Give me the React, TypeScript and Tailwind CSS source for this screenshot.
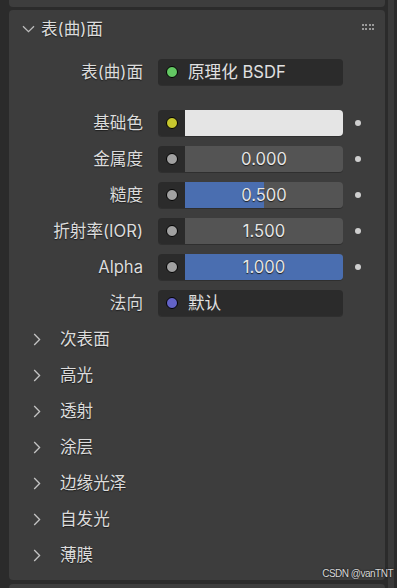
import React from "react";

// ── Data ──────────────────────────────────────────────────────────────────
type Prop = {
  label: string;
  socket: string;
  kind: "color" | "value" | "link";
  value?: string;
  fill?: number; // 0..1 blue fill for sliders
  dot?: boolean;
};

const PROPS: Prop[] = [
  { label: "基础色",      socket: "#c7c72e", kind: "color", dot: true },
  { label: "金属度",      socket: "#a1a1a1", kind: "value", value: "0.000", fill: 0, dot: true },
  { label: "糙度",        socket: "#a1a1a1", kind: "value", value: "0.500", fill: 0.5, dot: true },
  { label: "折射率(IOR)", socket: "#a1a1a1", kind: "value", value: "1.500", fill: 0, dot: true },
  { label: "Alpha",       socket: "#a1a1a1", kind: "value", value: "1.000", fill: 1, dot: true },
  { label: "法向",        socket: "#6363c7", kind: "link",  value: "默认" },
];

const SUBPANELS = ["次表面", "高光", "透射", "涂层", "边缘光泽", "自发光", "薄膜"];

const FONT = "font-['Inter','Noto_Sans_CJK_SC',sans-serif]";
const TXT = "text-[16.6px] text-[#dcdcdc] [text-shadow:0_1px_1px_#1e1e1e]";

// ── Bits ──────────────────────────────────────────────────────────────────
function Socket({ color }: { color: string }) {
  return (
    <span
      className="block w-[12px] h-[12px] rounded-full border border-black"
      style={{ background: color }}
    />
  );
}

function ChevronDown() {
  return (
    <svg width="13" height="8" viewBox="0 0 13 8" fill="none">
      <path d="M1 1.2 L6.5 6.6 L12 1.2" stroke="#bdbdbd" strokeWidth="1.3" />
    </svg>
  );
}

function ChevronRight() {
  return (
    <svg width="8" height="13" viewBox="0 0 8 13" fill="none">
      <path d="M1.2 1 L6.6 6.5 L1.2 12" stroke="#c4c4c4" strokeWidth="1.3" />
    </svg>
  );
}

function Grip() {
  return (
    <div className="grid grid-cols-4 gap-x-[1.4px] gap-y-[1.4px]">
      {Array.from({ length: 8 }).map((_, i) => (
        <span key={i} className="block w-[2px] h-[2px] bg-[#9a9a9a]" />
      ))}
    </div>
  );
}

function PropRow({ p }: { p: Prop }) {
  return (
    <div className="flex items-center h-[26px]">
      <div className={`w-[134px] text-right ${TXT}`}>{p.label}</div>
      <div className="ml-[15px] w-[185px] h-[26px] flex rounded-[4px] overflow-hidden shadow-[0_1px_0_#2f2f2f]">
        <div className="w-[27px] h-full bg-[#2b2b2b] flex items-center justify-center">
          <Socket color={p.socket} />
        </div>
        {p.kind === "color" && <div className="flex-1 bg-[#e5e5e5]" />}
        {p.kind === "value" && (
          <div className="relative flex-1 bg-[#545454] flex items-center justify-center">
            <div
              className="absolute left-0 top-0 h-full bg-[#4a6eb0]"
              style={{ width: `${(p.fill ?? 0) * 100}%` }}
            />
            <span className="relative text-[16.6px] text-[#e6e6e6] [text-shadow:0_1px_1px_#1e1e1e]">
              {p.value}
            </span>
          </div>
        )}
        {p.kind === "link" && (
          <div className="flex-1 bg-[#2b2b2b] flex items-center pl-[3px] text-[16.6px] text-[#e0e0e0]">
            {p.value}
          </div>
        )}
      </div>
      <div className="w-[30px] flex justify-center">
        {p.dot && <span className="block w-[6px] h-[6px] rounded-full bg-[#cfcfcf]" />}
      </div>
    </div>
  );
}

// ── Main ──────────────────────────────────────────────────────────────────
export default function App() {
  return (
    <div className={`relative w-[397px] h-[588px] bg-[#2b2b2b] overflow-hidden flex ${FONT}`}>
      {/* panels column */}
      <div className="w-[385px] pl-[9px] flex flex-col">
        <div className="h-[7px] bg-[#3d3d3d] rounded-b-[4px]" />
        <div className="mt-[3px] h-[570px] bg-[#3d3d3d] rounded-[4px] flex flex-col">
          {/* header */}
          <div className="h-[38px] flex items-center pl-[13px] pr-[11px]">
            <ChevronDown />
            <span className={`ml-[6px] ${TXT}`}>表(曲)面</span>
            <div className="ml-auto -mt-[4px]">
              <Grip />
            </div>
          </div>

          {/* shader */}
          <div className="mt-[11px] flex items-center h-[26px]">
            <div className={`w-[134px] text-right ${TXT}`}>表(曲)面</div>
            <div className="ml-[15px] w-[185px] h-[26px] flex items-center rounded-[4px] bg-[#2b2b2b] shadow-[0_1px_0_#2f2f2f]">
              <div className="w-[27px] flex justify-center">
                <Socket color="#63c763" />
              </div>
              <span className="ml-[3px] text-[16.6px] text-[#e0e0e0]">原理化 BSDF</span>
            </div>
          </div>

          <div className="mt-[25px] flex flex-col gap-[10px]">
            {PROPS.map((p) => (
              <PropRow key={p.label} p={p} />
            ))}
          </div>

          {/* collapsed sub-panels */}
          <div className="mt-[5px] flex flex-col">
            {SUBPANELS.map((s) => (
              <div key={s} className="h-[36px] flex items-center pl-[24px]">
                <ChevronRight />
                <span className={`ml-[19px] ${TXT}`}>{s}</span>
              </div>
            ))}
          </div>
        </div>
        <div className="mt-[4px] flex-1 bg-[#3d3d3d] rounded-t-[4px]" />
      </div>

      {/* scrollbar strip */}
      <div className="ml-[3px] w-[6px] h-full bg-[#3a3a3a]" />

      {/* watermark */}
      <span className="absolute right-[4px] bottom-[7px] text-[10px] tracking-[-0.5px] font-['Liberation_Sans',sans-serif] text-[#d8d8d8] [text-shadow:0_0_2px_#000]">
        CSDN @vanTNT
      </span>
    </div>
  );
}
